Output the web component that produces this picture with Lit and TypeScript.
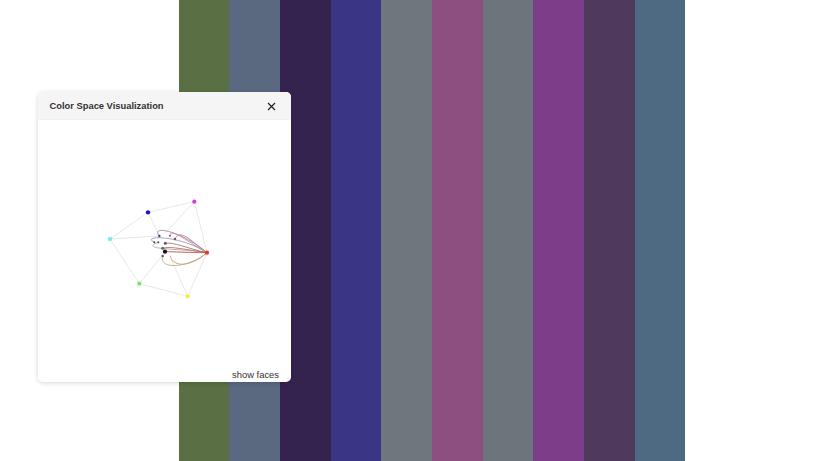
import { LitElement, html, css, svg } from "lit";
import { customElement } from "lit/decorators.js";

const STRIPES = ["#5a7044", "#5a6880", "#35234f", "#393685", "#70777c", "#8c4f7e", "#6c757c", "#7e3d88", "#4f3a5c", "#4d6a82"];
const z = (x: number, y: number): [number, number] => [90 + x / 3, 185 + y / 3];
const RED = z(351, 203);
const OUTER: { p: [number, number]; c: string; r: number }[] = [
  { p: RED, c: "#e8352c", r: 2.1 },
  { p: z(313, 50), c: "#d63de0", r: 2.1 },
  { p: z(174, 82), c: "#1f14c8", r: 2.2 },
  { p: z(60, 162), c: "#7fe8e8", r: 2.2 },
  { p: z(148, 296), c: "#77e860", r: 2.1 },
  { p: z(293, 334), c: "#eef050", r: 2.2 },
];
const HULL: [number, number][] = [[0, 1], [1, 2], [2, 3], [3, 4], [4, 5], [5, 0]];
const SPOKES: [[number, number], [number, number]][] = [
  [z(174, 82), z(210, 155)],
  [z(60, 162), z(205, 153)],
  [z(313, 50), z(225, 145)],
  [z(148, 296), z(222, 205)],
  [z(293, 334), z(245, 225)],
  [z(351, 203), z(225, 200)],
];
const CURVES: { to: [number, number]; c1: [number, number]; c2: [number, number]; c: string }[] = [
  { to: z(208, 153), c1: z(270, 135), c2: z(180, 120), c: "#9a88a8" },
  { to: z(255, 162), c1: z(300, 165), c2: z(270, 130), c: "#c08098" },
  { to: z(240, 152), c1: z(300, 175), c2: z(240, 125), c: "#cc8c94" },
  { to: z(193, 172), c1: z(270, 150), c2: z(150, 150), c: "#9c9cb0" },
  { to: z(205, 172), c1: z(280, 190), c2: z(140, 195), c: "#b0aaa8" },
  { to: z(226, 175), c1: z(290, 190), c2: z(250, 170), c: "#b07070" },
  { to: z(218, 190), c1: z(290, 195), c2: z(240, 182), c: "#b87068" },
  { to: z(225, 200), c1: z(290, 203), c2: z(250, 200), c: "#c06058" },
  { to: z(218, 213), c1: z(295, 250), c2: z(205, 255), c: "#b8b088" },
  { to: z(240, 212), c1: z(305, 245), c2: z(250, 250), c: "#c8a078" },
];
const DOTS: { p: [number, number]; r: number; c: string }[] = [
  { p: z(208, 153), r: 1.2, c: "#46466e" },
  { p: z(255, 162), r: 1.2, c: "#70506e" },
  { p: z(240, 152), r: 1, c: "#75607a" },
  { p: z(193, 172), r: 1.1, c: "#50506a" },
  { p: z(205, 172), r: 1.1, c: "#505870" },
  { p: z(226, 175), r: 1.5, c: "#5a5a60" },
  { p: z(218, 190), r: 1.5, c: "#606468" },
  { p: z(225, 200), r: 2.1, c: "#16161a" },
  { p: z(218, 213), r: 1.2, c: "#5a5e50" },
];

@customElement("app-root")
export class AppRoot extends LitElement {
  static styles = css`
    :host {
      display: block;
      width: 820px;
      height: 461px;
      position: relative;
      overflow: hidden;
      background: #fff;
      font-family: "Liberation Sans", Arial, sans-serif;
    }
    .stripes {
      display: flex;
      height: 100%;
      padding-left: 178.8px;
    }
    .stripe {
      width: 50.65px;
      height: 100%;
    }
    .panel {
      position: absolute;
      left: 38px;
      top: 92px;
      width: 253px;
      height: 290px;
      background: #fff;
      border-radius: 5px;
      box-shadow: 0 1px 5px rgba(0, 0, 0, 0.16);
      display: flex;
      flex-direction: column;
      overflow: hidden;
    }
    .head {
      flex: none;
      height: 28px;
      box-sizing: border-box;
      padding: 0 15px 0 11.5px;
      background: #f5f5f5;
      border-bottom: 1px solid #f0f0f0;
      display: flex;
      align-items: center;
      justify-content: space-between;
    }
    .title {
      font-size: 9.35px;
      font-weight: 700;
      color: #333;
    }
    .close {
      width: 9px;
      height: 9px;
      display: block;
      margin-top: 2px;
    }
    .body {
      flex: 1;
      position: relative;
      min-height: 0;
    }
    .plot {
      display: block;
      width: 100%;
      height: 100%;
      filter: blur(0.35px);
    }
    .toggle {
      position: absolute;
      right: 12px;
      bottom: 1px;
      font-size: 9.4px;
      line-height: 12px;
      color: #333;
    }
  `;

  render() {
    return html`
      <div class="stripes">
        ${STRIPES.map((c) => html`<div class="stripe" style="background:${c}"></div>`)}
      </div>
      <div class="panel">
        <div class="head">
          <span class="title">Color Space Visualization</span>
          <svg class="close" viewBox="0 0 9 9">
            <path d="M1 1 L8 8 M8 1 L1 8" stroke="#222" stroke-width="1.2" fill="none" />
          </svg>
        </div>
        <div class="body">
          <svg class="plot" viewBox="38 120 253 262">
            ${HULL.map(([a, b]) => {
              const [x1, y1] = OUTER[a].p;
              const [x2, y2] = OUTER[b].p;
              return svg`<line x1=${x1} y1=${y1} x2=${x2} y2=${y2} stroke="#e0e4e0" stroke-width="0.8" />`;
            })}
            ${SPOKES.map(
              ([a, b]) =>
                svg`<line x1=${a[0]} y1=${a[1]} x2=${b[0]} y2=${b[1]} stroke="#e2e2e2" stroke-width="0.8" />`
            )}
            ${CURVES.map(
              (k) =>
                svg`<path d="M${RED[0]} ${RED[1]} C${k.c1[0]} ${k.c1[1]} ${k.c2[0]} ${k.c2[1]} ${k.to[0]} ${k.to[1]}" fill="none" stroke=${k.c} stroke-width="0.9" />`
            )}
            ${DOTS.map((d) => svg`<circle cx=${d.p[0]} cy=${d.p[1]} r=${d.r} fill=${d.c} />`)}
            ${OUTER.map((d) => svg`<circle cx=${d.p[0]} cy=${d.p[1]} r=${d.r} fill=${d.c} />`)}
          </svg>
          <span class="toggle">show faces</span>
        </div>
      </div>
    `;
  }
}
